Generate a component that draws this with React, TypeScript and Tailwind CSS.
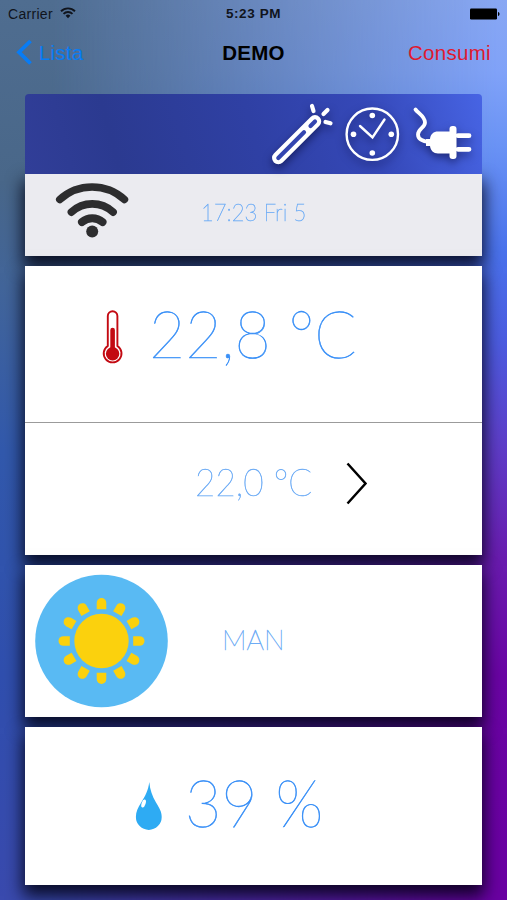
import React from 'react'

const thin = "origin-left whitespace-nowrap font-['Lato',sans-serif] font-thin"

const StatusBar = () => (
  <div className="relative flex h-7 items-center justify-between pl-2 pr-1.5 text-[14px] leading-7 text-[#10141c]">
    <div className="flex items-center gap-[7px]">
      <span className="tracking-[0.3px]">Carrier</span>
      <svg className="-mt-0.5" width="16" height="12" viewBox="0 0 16 12" fill="none" stroke="#10141c" strokeWidth="1.9">
        <path d="M1 4.2a10 10 0 0 1 14 0M3.5 6.9a6.4 6.4 0 0 1 9 0" />
        <path d="M8 11.3 5.6 8.8a3.4 3.4 0 0 1 4.800 0z" fill="#10141c" stroke="none" />
      </svg>
    </div>
    <span className="absolute inset-x-0 text-center text-[13.5px] font-bold tracking-[0.6px]">5:23 PM</span>
    <svg className="-mt-px" width="31" height="12" viewBox="0 0 31 12" fill="#000">
      <rect x="0" y="0.5" width="27" height="11" rx="1.2" />
      <path d="M28 4c2 .3 2 3.700 0 4z" />
    </svg>
  </div>
)

const NavBar = () => (
  <div className="grid h-[66px] grid-cols-3 px-4 pt-1 text-[20.5px] leading-[42px]">
    <div className="flex h-[42px] items-center gap-1.5 text-[#087cf5]">
      <svg className="-mt-0.5" width="17" height="26" viewBox="0 0 17 26" fill="none" stroke="currentColor" strokeWidth="3.8">
        <path d="M14.500 2 3 13.200 14.500 24.500" />
      </svg>
      <span className="tracking-[0.2px]">Lista</span>
    </div>
    <div className="text-center text-[20.5px] font-bold tracking-[0.2px] text-black">DEMO</div>
    <div className="text-right tracking-[0.3px] text-[#e0182f]">Consumi</div>
  </div>
)

const WandIcon = () => (
  <svg width="64" height="64" viewBox="270 102 64 64" fill="none" stroke="#fff" strokeLinecap="round">
    <path d="M278.300 158 315 121.300" strokeWidth="12.500" />
    <path d="M278.300 158 304 132.300M310.500 126 315 121.500" stroke="#3345b0" strokeWidth="4.200" />
    <path d="M312 106l1.500 5M327.500 110l-4 4M325.500 122l5 1.300" strokeWidth="4.200" />
  </svg>
)

const ClockIcon = () => (
  <svg width="56" height="56" viewBox="344 106 56 56" fill="none" stroke="#fff" strokeLinecap="round">
    <circle cx="372.300" cy="134.200" r="25.700" strokeWidth="2.400" />
    <path d="M360 126 372.500 137.500 384.500 119.500" strokeWidth="2.400" />
    <g fill="#fff" stroke="none">
      <circle cx="372.300" cy="115.500" r="2.800" />
      <circle cx="372.300" cy="153" r="2.800" />
      <circle cx="353.500" cy="134.200" r="2.800" />
      <circle cx="391.300" cy="134.200" r="2.800" />
    </g>
  </svg>
)

const PlugIcon = () => (
  <svg width="62" height="56" viewBox="412 106 62 56" fill="none" stroke="#fff" strokeLinecap="round">
    <path d="M415.500 109.500c3 4 9.500 7 9.500 13 0 5-7 6.500-7 12 0 5 5 7 12 7.500" strokeWidth="3.800" />
    <path d="M426 139h4c.5-5 3.500-7.500 8-7.500H451v22h-13c-4.500 0-7.500-3-8-7.500h-4z" fill="#fff" stroke="none" />
    <rect x="449.500" y="126" width="7" height="33" rx="3" fill="#fff" stroke="none" />
    <path d="M458 135.700h11M458 149.300h11" strokeWidth="4.800" />
  </svg>
)

const SignalIcon = () => (
  <svg width="74" height="58" viewBox="55 181 74 58" fill="none" stroke="#2d2d2f" strokeLinecap="round">
    <path d="M59.800 199.500a48 48 0 0 1 64.600 0" strokeWidth="7.600" />
    <path d="M71.500 212a30.500 30.500 0 0 1 41.500 0" strokeWidth="7.800" />
    <path d="M82 222a15.500 15.500 0 0 1 20.500 0" strokeWidth="8" />
    <circle cx="92.200" cy="231.500" r="6" fill="#2d2d2f" stroke="none" />
  </svg>
)

const ThermometerIcon = () => (
  <svg width="22" height="56" viewBox="102 309 22 56">
    <path
      d="M107.800 346V316a4.800 4.800 0 0 1 9.600 0v30a8.900 8.900 0 1 1-9.600 0z"
      fill="#fff"
      stroke="#c30a12"
      strokeWidth="1.900"
    />
    <circle cx="112.600" cy="353.700" r="6.700" fill="#c30a12" />
    <path d="M112.600 352v-22" stroke="#c30a12" strokeWidth="4.600" strokeLinecap="round" />
  </svg>
)

const SunIcon = () => (
  <svg width="134" height="134" viewBox="-67.500 -67 134 134">
    <circle r="66.300" fill="#59baf3" />
    <circle r="27.200" fill="#fbd10d" />
    {Array.from({ length: 12 }, (_, i) => (
      <path
        key={i}
        d="M-4.800-31.700V-38a4.800 5 0 0 1 9.600 0v6.300z"
        fill="#fbd10d"
        transform={`rotate(${i * 30})`}
      />
    ))}
  </svg>
)

const DropIcon = () => (
  <svg width="28" height="50" viewBox="135 781 28 50">
    <path
      d="M149.300 782c.7 8 3 14 6.700 20.500 3.500 6 5.700 9 5.700 14.500a12.900 12.900 0 0 1-25.800 0c0-5.500 2-9 5.300-14.500 4-6.500 7-12 8.100-20.500z"
      fill="#2eabf3"
    />
    <ellipse cx="143.600" cy="803.500" rx="2" ry="4.200" transform="rotate(18 143.600 803.500)" fill="#fff" />
  </svg>
)

const cardShadow = 'shadow-[0_9px_16px_2px_rgba(0,0,15,0.85)]'

export default function App() {
  return (
    <div className="grid h-[900px] w-[507px] overflow-hidden bg-[linear-gradient(180deg,#4f6d90_0%,#496789_20%,#42659a_32%,#3259ac_50%,#304fae_75%,#3a4aae_100%)] font-['Liberation_Sans',Arial,sans-serif]">
      {/* right half of the wallpaper fades in over the left one */}
      <div className="col-start-1 row-start-1 bg-[linear-gradient(180deg,#88a7f3_0%,#80a2f8_8%,#6a93f5_16%,#4a72ec_28%,#4c5ce0_38%,#5f3cc8_50%,#6a1cb0_62%,#6a04a4_75%,#6a00a2_100%)] [mask-image:linear-gradient(90deg,transparent_10%,black_98%)]" />
      <div className="relative z-10 col-start-1 row-start-1 min-w-0">
        <StatusBar />
        <NavBar />

        <main className="mx-auto flex w-[457px] flex-col gap-2.5">
          {/* header */}
          <section className="h-[162px]">
            <div className="relative flex h-20 items-start justify-end rounded-t-[4px] bg-[linear-gradient(75deg,#313e98_0%,#2b3a90_20%,#2f40a4_50%,#3548b8_75%,#4764e4_100%)] pr-2">
              <div className="mt-2 flex drop-shadow-[0_4px_4px_rgba(0,0,40,0.5)]">
                <WandIcon />
                <div className="ml-2.5 mt-1">
                  <ClockIcon />
                </div>
                <div className="ml-3 mt-1">
                  <PlugIcon />
                </div>
              </div>
            </div>
            <div className={`flex h-[82px] bg-[#ebebf0] pl-[30px] pt-[7px] ${cardShadow}`}>
              <SignalIcon />
              <div
                className={`${thin} ml-[72px] mt-[14px] h-[34px] scale-x-[0.92] text-[24px] leading-[34px] text-[#6eacf5] [-webkit-text-stroke:0.5px_#6eacf5]`}
              >
                17:23 Fri 5
              </div>
            </div>
          </section>

          {/* temperature */}
          <section className={`h-[289px] bg-white ${cardShadow}`}>
            <div className="flex h-[157px] border-b border-[#9b9b9b] pl-[77px] pt-[43px]">
              <ThermometerIcon />
              <div
                className={`${thin} -mt-2 ml-[25px] h-16 scale-x-[0.945] text-[66px] leading-[64px] text-[#3a90f7] [-webkit-text-stroke:0.6px_#3a90f7]`}
              >
                22,8 °C
              </div>
            </div>
            <div className="flex pl-[170px] pt-[39px]">
              <div
                className={`${thin} h-10 w-[118px] scale-x-[0.95] text-[37px] leading-[40px] text-[#6eacf5] [-webkit-text-stroke:0.5px_#6eacf5]`}
              >
                22,0 °C
              </div>
              <svg className="ml-8" width="24" height="44" viewBox="345 462 24 44" fill="none" stroke="#000" strokeWidth="2.500">
                <path d="M347.500 463.500 365.500 483.500 347.500 503.500" />
              </svg>
            </div>
          </section>

          {/* mode */}
          <section className={`flex h-[152px] bg-white pl-[9px] pt-[9px] ${cardShadow}`}>
            <SunIcon />
            <div
              className={`${thin} ml-[54px] mt-[46px] h-10 text-[27.5px] leading-[40px] text-[#6eacf5] [-webkit-text-stroke:0.5px_#6eacf5]`}
            >
              MAN
            </div>
          </section>

          {/* humidity */}
          <section className={`flex h-[158px] bg-white pl-[110px] pt-[54px] ${cardShadow}`}>
            <DropIcon />
            <div
              className={`${thin} -mt-[11px] ml-[22px] h-16 scale-x-[0.95] text-[66px] leading-[64px] text-[#3a90f7] [-webkit-text-stroke:0.6px_#3a90f7]`}
            >
              39 %
            </div>
          </section>
        </main>
      </div>
    </div>
  )
}
